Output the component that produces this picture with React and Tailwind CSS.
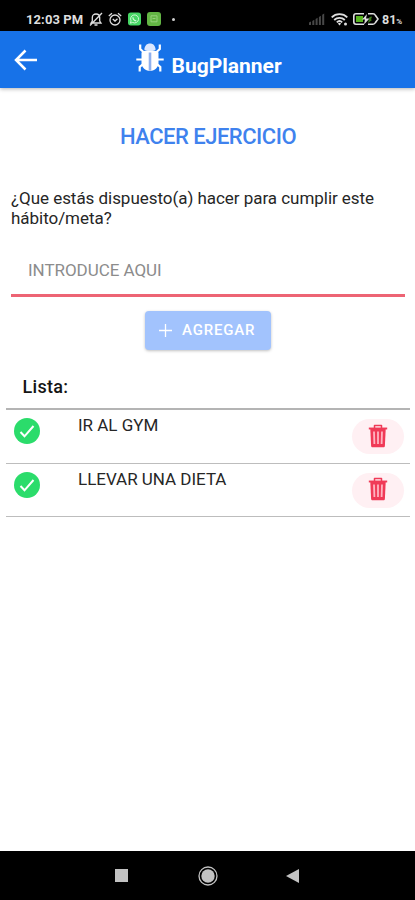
import { useState } from 'react'

const BugIcon = ({ className }) => (
  <svg viewBox="0 0 28 30" className={className} fill="none" stroke="currentColor">
    <path d="M8.300 6.800C8.800 2.600 10.800.6 14 .6s5.200 2 5.700 6.200c-1.700 1-9.700 1-11.400 0Z" fill="#dce8ff" stroke="none" />
    <path d="M5.500 9.500C7 7.800 10 7.300 14 7.300s7 .5 8.500 2.200v10c0 5-3.500 8.300-8.500 8.300s-8.500-3.300-8.500-8.300Z" fill="currentColor" stroke="none" />
    <path d="M4.200 1.500v4.500L8 9.500M23.800 1.500v4.500L20 9.500M.3 16.500H6M22 16.500h5.700M7 21l-3.300 3v4.500M21 21l3.300 3v4.500" strokeWidth="2.200" />
    <path d="M14 9.500v18" stroke="#8fb0ee" strokeWidth="2.600" />
  </svg>
)

const TrashIcon = ({ className }) => (
  <svg viewBox="0 0 20 24" className={className} fill="none" stroke="currentColor">
    <path d="M6.500 4V1.500h7V4" strokeWidth="1.500" strokeLinejoin="round" />
    <path d="M.8 4.500h18.400" strokeWidth="1.900" />
    <path d="M2.300 5l.8 16.700c.1 1 .6 1.500 1.600 1.500h10.600c1 0 1.500-.5 1.600-1.500l.8-16.700Z" fill="currentColor" stroke="none" />
    <path d="M6 7.500l.4 12.500M10 7.500V20M14 7.500L13.600 20" stroke="#ffb3c0" strokeWidth="1.800" />
  </svg>
)

const StatusBar = () => (
  <div className="flex h-[31px] shrink-0 items-start bg-black pt-[11px] pl-[26px] text-[#dedede]">
    <span className="w-[58px] text-[13px] leading-[17px] font-bold tracking-[0.1px] whitespace-nowrap">12:03 PM</span>
    <svg viewBox="0 0 14 16" className="ml-[5px] h-4 w-[14px]" fill="none" stroke="currentColor" strokeWidth="1.300">
      <path d="M2 12h10l-1.300-2V6.500C10.700 4.200 9.200 3 7 3S3.300 4.200 3.300 6.500V10ZM5.500 14h3M1 14.500 13 2" />
    </svg>
    <svg viewBox="0 0 14 16" className="ml-[5px] h-4 w-[14px]" fill="none" stroke="currentColor" strokeWidth="1.300">
      <circle cx="7" cy="9" r="5" />
      <path d="M.8 5 4 2.300M13.200 5 10 2.300M4.800 8l2.200 2 2.500-2.300" />
    </svg>
    <svg viewBox="0 0 14 14" className="mt-[1px] ml-[6px] h-[14px] w-[13px]" fill="none">
      <rect width="14" height="14" rx="3" fill="#47d765" />
      <path d="m2.500 11.500.8-2.500a4.300 4.300 0 1 1 1.700 1.700Z" stroke="#d5f7db" strokeWidth="1" />
      <path d="M5.300 5c0 2 1.500 3.600 3.600 4" stroke="#d5f7db" strokeWidth="1.300" />
    </svg>
    <svg viewBox="0 0 14 14" className="mt-[1px] ml-[6px] h-[14px] w-[14px]" fill="none">
      <rect width="14" height="14" rx="3" fill="#63b544" />
      <path d="M4 3.800h6v6H4ZM5.500 6.500h3" stroke="#96d17d" />
    </svg>
    <span className="mt-[7px] ml-[11px] h-[3px] w-[3px] rounded-full bg-[#d0d0d0]" />
    <svg viewBox="0 0 16 13" className="mt-[2px] ml-[134px] h-[13px] w-4" fill="#484848">
      <path d="M0 12V9.500l2-1V12ZM3.300 12V8l2-1.200V12ZM6.600 12V6l2-1.200V12ZM9.900 12V4l2-1.300V12ZM13.200 12V1.800l2-1.300V12Z" />
    </svg>
    <svg viewBox="0 0 17 14" className="mt-[1px] ml-[6px] h-[14px] w-[17px]" fill="none" stroke="currentColor" strokeWidth="1.800">
      <path d="M.7 5.300c4.300-4.200 11.300-4.200 15.600 0M3.200 8c3-2.900 7.600-2.900 10.600 0M5.800 10.300c1.600-1.500 3.800-1.500 5.400 0" />
      <path d="m8.500 13.500-1.700-2 1.700-.8 1.700.8Z" fill="currentColor" stroke="none" />
      <circle cx="14.500" cy="12" r="1.500" fill="currentColor" stroke="none" />
    </svg>
    <svg viewBox="0 0 26 12" className="mt-[2px] ml-[5px] h-3 w-[26px]" fill="none" stroke="currentColor" strokeWidth="1.600">
      <path d="M11 .8H3C1.700.8.8 1.700.8 3v6c0 1.300.9 2.200 2.200 2.200h8M15 .8h5c1.300 0 2 .7 2.500 1.700L25 6l-2.500 3.500c-.5 1-1.200 1.700-2.500 1.700h-5" />
      <path d="M3 3h7v6H3Z" fill="#57b51f" stroke="none" />
      <path d="m16.500 4 2.500-.5-1 3 1 .5-4 3Z" fill="#397b17" stroke="none" />
      <path d="m14 1-5 5.500h3l-1 5 5.500-6H13Z" fill="currentColor" stroke="none" />
    </svg>
    <span className="ml-[3px] text-[12.500px] leading-[17px] font-bold">81</span>
    <span className="mt-[2px] text-[8px] leading-[17px] font-bold">%</span>
  </div>
)

const Header = () => (
  <header className="flex h-[57px] shrink-0 bg-[#1772e8] text-white shadow-[0_1px_4px_rgba(0,0,0,0.3)]">
    <svg viewBox="0 0 24 22" className="mt-[18px] ml-[14px] h-[22px] w-6" fill="none" stroke="currentColor" strokeWidth="2.500">
      <path d="M11.500 1.500 2 11l9.500 9.500M2 11h21" />
    </svg>
    <BugIcon className="mt-[12px] ml-[98px] h-[30px] w-7" />
    <h1 className="mt-[22px] ml-[7.500px] text-[21px] leading-[26px] font-bold">BugPlanner</h1>
  </header>
)

const HabitItem = ({ name }) => (
  <li className="flex h-[53.500px] items-start border-b-[1.500px] border-[#bdbdbd]">
    <svg viewBox="0 0 26 26" className="mt-[8px] ml-2 h-[26px] w-[26px]" fill="none">
      <circle cx="13" cy="13" r="13" fill="#2bdc6b" />
      <path d="m6.500 14 4 4.300L19.500 8" stroke="white" strokeWidth="2" />
    </svg>
    <span className="ml-[38px] pt-[5px] text-[17px] leading-5 tracking-[-0.02px]">{name}</span>
    <button className="mt-[9px] mr-[6px] ml-auto flex h-[35px] w-[52px] items-center justify-center rounded-full bg-[#fff0f3] text-[#f03a57]">
      <TrashIcon className="-mt-[2px] h-6 w-5" />
    </button>
  </li>
)

const NavBar = () => (
  <nav className="flex h-[49px] shrink-0 items-center bg-black pl-[115px] text-[#c2c2c2]">
    <span className="h-[13px] w-[13px] bg-[#c2c2c2]" />
    <svg viewBox="0 0 20 20" className="ml-[70px] h-5 w-5" fill="none">
      <circle cx="10" cy="10" r="9" stroke="currentColor" strokeWidth="1.300" />
      <circle cx="10" cy="10" r="6.700" fill="currentColor" />
    </svg>
    <svg viewBox="0 0 13 14" className="ml-[68px] h-[14px] w-[13px]" fill="currentColor">
      <path d="M13 0v14L0 7Z" />
    </svg>
  </nav>
)

const App = () => {
  const [habits] = useState(['IR AL GYM', 'LLEVAR UNA DIETA'])

  return (
    <div className="flex h-[900px] w-[415px] flex-col overflow-hidden bg-white font-['Roboto',sans-serif] text-[#262626]">
      <StatusBar />
      <Header />
      <main className="flex flex-1 flex-col">
        <h2 className="mt-[36px] pl-px text-center text-[22px] leading-[26px] font-medium tracking-[-0.500px] text-[#3f82ee]">HACER EJERCICIO</h2>
        <p className="mt-[38px] ml-[11px] text-[17px] leading-5 tracking-[-0.04px] whitespace-nowrap">
          ¿Que estás dispuesto(a) hacer para cumplir este
          <br />
          hábito/meta?
        </p>
        <div className="mt-[21px] mr-[10px] ml-[11px] h-[48px] border-b-[3px] border-[#ed6474]">
          <input
            className="block w-full pt-[11px] pl-[17px] text-[17px] leading-5 tracking-[-0.05px] outline-none placeholder:text-[#8c8c8c]"
            placeholder="INTRODUCE AQUI"
          />
        </div>
        <button className="mt-[14px] ml-[145px] flex h-[39px] w-[126px] items-center rounded-[4px] bg-[#a2c3fd] pl-[14px] text-white shadow-[0_1px_3px_rgba(0,0,0,0.25)]">
          <svg viewBox="0 0 13 13" className="h-[13px] w-[13px]" stroke="currentColor" strokeWidth="1.300">
            <path d="M6.500 0v13M0 6.500h13" />
          </svg>
          <span className="ml-[10px] text-[15px] font-medium tracking-[0.8px]">AGREGAR</span>
        </button>
        <h3 className="mt-[26px] ml-[22.500px] text-[18px] leading-[22px] font-medium tracking-[0.300px] text-[#151515]">Lista:</h3>
        <ul className="mt-[10px] mr-[5px] ml-[6px] border-t-2 border-[#b4b4b4]">
          {habits.map(habit => (
            <HabitItem key={habit} name={habit} />
          ))}
        </ul>
      </main>
      <NavBar />
    </div>
  )
}

export default App
